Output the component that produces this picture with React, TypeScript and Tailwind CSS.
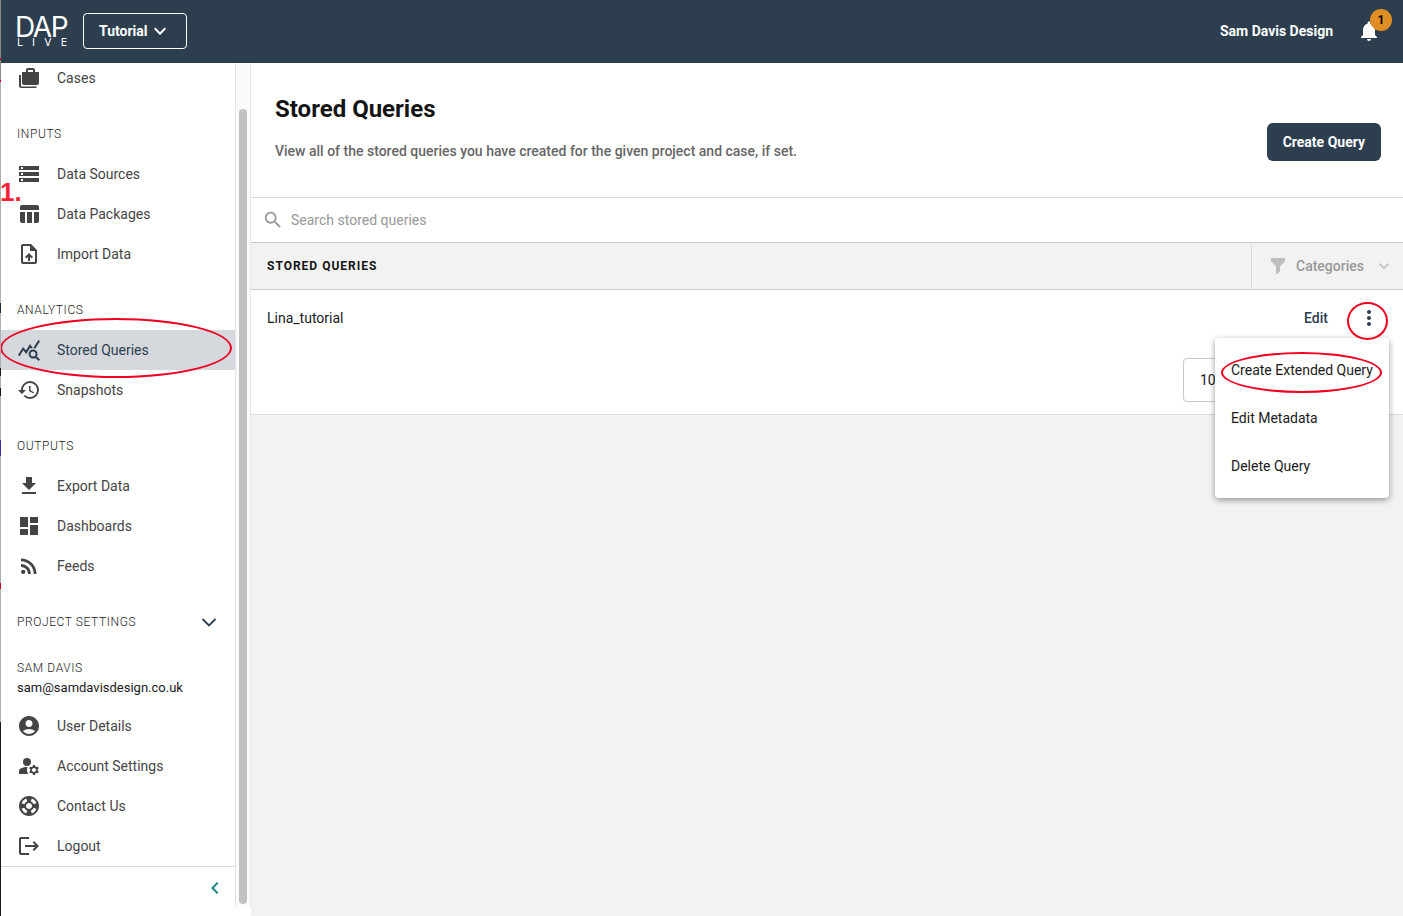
import type { ComponentType, ReactNode, SVGProps } from "react";
import {
  MdAccountCircle,
  MdChevronLeft,
  MdDashboard,
  MdExpandMore,
  MdFileDownload,
  MdHistory,
  MdLogout,
  MdManageAccounts,
  MdMoreVert,
  MdNotifications,
  MdOutlineUploadFile,
  MdQueryStats,
  MdRssFeed,
  MdSearch,
  MdStorage,
  MdSupport,
  MdTableChart,
} from "react-icons/md";

type NavItemProps = { icon: ComponentType<SVGProps<SVGSVGElement>>; label: string; active?: boolean };

function CasesIcon(props: SVGProps<SVGSVGElement>) {
  return (
    <svg viewBox="0 0 24 24" fill="currentColor" {...props}>
      <path
        fillRule="evenodd"
        d="M18 6V4c0-1.100-.9-2-2-2h-5c-1.100 0-2 .9-2 2v2H5v11c0 1.100.9 2 2 2h13c1.100 0 2-.9 2-2V6h-4ZM16 6h-5V4h5v2Z"
      />
      <path d="M4 9H2v11c0 1.100.9 2 2 2h14c1.100 0 2-.9 2-1.600H4V9Z" />
    </svg>
  );
}

function FilterIcon() {
  return (
    <svg viewBox="0 0 14 16" className="h-4 w-[14px]" fill="#bdbdbd" aria-hidden>
      <path d="M.6 0h12.800q.6 0 .6.600v2.400L9 8.600V13.400L5.600 16H5V8.600L0 3V.6Q0 0 .6 0Z" />
    </svg>
  );
}

function ThinChevron() {
  return (
    <svg viewBox="0 0 16 16" className="size-4 text-[#2d3e4f]" fill="none" stroke="currentColor" strokeWidth="1.8" aria-hidden>
      <path d="M1.500 5 8 11.500 14.500 5" />
    </svg>
  );
}

function NavItem({ icon: Icon, label, active }: NavItemProps) {
  return (
    <li className={active ? "relative bg-[#d5d8dd] text-[#2d3e4f]" : "text-[#444444]"}>
      <a href="#" className="flex h-10 items-center gap-4 px-4 text-sm">
        <Icon className="size-6 shrink-0" aria-hidden />
        {label}
      </a>
      {active && <Ring className="-left-px -top-3 h-[60px] w-[232px]" />}
    </li>
  );
}

function NavHeading({ children }: { children: ReactNode }) {
  return (
    <h2 className="mt-4 flex h-10 shrink-0 items-center justify-between pl-4 pr-[18px] text-xs font-light tracking-wider text-[#222222]">
      {children}
    </h2>
  );
}

/* Red annotation ellipse laid over the control it points out. */
function Ring({ className }: { className: string }) {
  return (
    <span
      aria-hidden
      className={`pointer-events-none absolute z-20 rounded-[50%] border-2 border-[#f00020] ${className}`}
    />
  );
}

function Logo() {
  return (
    <a href="#" className="flex w-[54px] flex-col pb-px text-white">
      <span className="font-['Inter',sans-serif] text-[28px] font-normal leading-6 tracking-tighter">DAP</span>
      <span className="flex justify-between px-[2px] font-['DejaVu_Sans',sans-serif] text-[10px] font-normal leading-2">
        <span>L</span>
        <span>I</span>
        <span>V</span>
        <span>E</span>
      </span>
    </a>
  );
}

function TopBar() {
  return (
    <header className="flex h-[63px] shrink-0 items-center border-b border-[#2d3e4f] bg-[#2d3e4f] pl-[14px] pr-[22px] text-sm font-bold text-white">
      <Logo />
      <button className="ml-[14px] flex h-9 w-[104px] items-center rounded border border-white pl-[15px]">
        Tutorial
        <MdExpandMore className="size-6" aria-hidden />
      </button>
      <span className="ml-auto">Sam Davis Design</span>
      <button className="relative ml-6" aria-label="Notifications">
        <MdNotifications className="size-6" aria-hidden />
        <span className="absolute -right-[11px] -top-[10px] flex size-[22px] items-center justify-center rounded-full bg-[#e08e24] text-xs text-black">
          1
        </span>
      </button>
    </header>
  );
}

function Sidebar() {
  return (
    <aside className="flex w-[250px] shrink-0 bg-white pb-[9px]">
      <div className="flex min-w-0 flex-1 flex-col">
        <nav className="flex min-h-0 flex-1 flex-col justify-end overflow-hidden">
          <ul className="shrink-0">
            <NavItem icon={CasesIcon} label="Cases" />
          </ul>
          <NavHeading>INPUTS</NavHeading>
          <ul className="shrink-0">
            <NavItem icon={MdStorage} label="Data Sources" />
            <NavItem icon={MdTableChart} label="Data Packages" />
            <NavItem icon={MdOutlineUploadFile} label="Import Data" />
          </ul>
          <NavHeading>ANALYTICS</NavHeading>
          <ul className="shrink-0">
            <NavItem icon={MdQueryStats} label="Stored Queries" active />
            <NavItem icon={MdHistory} label="Snapshots" />
          </ul>
          <NavHeading>OUTPUTS</NavHeading>
          <ul className="shrink-0">
            <NavItem icon={MdFileDownload} label="Export Data" />
            <NavItem icon={MdDashboard} label="Dashboards" />
            <NavItem icon={MdRssFeed} label="Feeds" />
          </ul>
          <NavHeading>
            PROJECT SETTINGS
            <button aria-label="Expand project settings">
              <ThinChevron />
            </button>
          </NavHeading>
          <div className="mb-2 mt-4 shrink-0 px-4">
            <p className="text-xs font-light leading-5 tracking-wider text-[#222222]">SAM DAVIS</p>
            <p className="text-[13px] leading-5 text-[#1a1a1a]">sam@samdavisdesign.co.uk</p>
          </div>
          <ul className="shrink-0">
            <NavItem icon={MdAccountCircle} label="User Details" />
            <NavItem icon={MdManageAccounts} label="Account Settings" />
            <NavItem icon={MdSupport} label="Contact Us" />
            <NavItem icon={MdLogout} label="Logout" />
          </ul>
        </nav>
        <div className="flex h-[41px] shrink-0 items-center justify-end border-t border-[#dcdcdc] pr-2 pt-[2px]">
          <button aria-label="Collapse menu">
            <MdChevronLeft className="size-6 text-[#168a7f]" aria-hidden />
          </button>
        </div>
      </div>
      <div className="flex w-4 flex-col border-x border-[#e6e6e6] bg-[#fafafa] px-[3px] pb-[3px] pt-[46px]">
        <div className="flex-1 rounded-full bg-[#c1c1c1]" />
      </div>
    </aside>
  );
}

function RowMenu() {
  return (
    <ul
      role="menu"
      className="absolute right-[14px] top-12 z-10 w-[174px] rounded bg-white py-2 text-left text-sm font-normal text-[#1a1a1a] shadow-[0_2px_6px_rgba(0,0,0,0.4)]"
    >
      {["Create Extended Query", "Edit Metadata", "Delete Query"].map((label, i) => (
        <li key={label} role="none" className="relative">
          <button role="menuitem" className="flex h-12 w-full items-center whitespace-nowrap pl-4">
            {label}
          </button>
          {i === 0 && <Ring className="left-[6px] top-[6px] h-[41px] w-[161px]" />}
        </li>
      ))}
    </ul>
  );
}

function QueriesPage() {
  return (
    <main className="flex min-w-0 flex-1 flex-col bg-[#f2f2f2]">
      <div className="border-b border-[#dcdcdc] bg-white">
        <section className="flex h-[135px] items-start justify-between border-b border-[#dcdcdc] pl-6 pr-[22px]">
          <div className="pt-[30px]">
            <h1 className="text-2xl font-bold leading-8 text-[#141414]">Stored Queries</h1>
            <p className="mt-4 text-sm font-medium text-[#666666]">
              View all of the stored queries you have created for the given project and case, if set.
            </p>
          </div>
          <button className="mt-[60px] h-[38px] rounded-md bg-[#2d3e4f] px-4 text-sm font-bold text-white">
            Create Query
          </button>
        </section>

        <label className="flex h-[45px] items-center gap-[7px] border-b border-[#c8c8c8] pl-[11px]">
          <MdSearch className="size-[22px] text-[#999999]" aria-hidden />
          <input
            type="search"
            aria-label="Search stored queries"
            placeholder="Search stored queries"
            className="flex-1 bg-transparent text-sm outline-none placeholder:text-[#999999]"
          />
        </label>

        <table className="w-full border-separate border-spacing-0 text-left text-sm">
          <thead>
            <tr className="h-[47px] bg-[#f2f2f2]">
              <th className="border-b border-[#c8c8c8] pl-4 text-xs font-bold tracking-[1px] text-[#141414]">
                STORED QUERIES
              </th>
              <th className="w-[152px] border-b border-[#c8c8c8] p-0">
                <button className="flex h-11 w-full items-center border-l border-[#dcdcdc] pl-[19px] font-medium text-[#999999]">
                  <FilterIcon />
                  <span className="ml-[11px]">Categories</span>
                  <MdExpandMore className="ml-auto mr-[9px] size-5 text-[#bdbdbd]" aria-hidden />
                </button>
              </th>
            </tr>
          </thead>
          <tbody>
            <tr className="h-14">
              <td className="pl-4 text-[#1a1a1a]">Lina_tutorial</td>
              <td className="relative p-0">
                <div className="flex items-center justify-between pl-[53px] pr-[22px] text-[#2d3e4f]">
                  <button className="font-medium">Edit</button>
                  <button aria-label="More actions" aria-haspopup="menu">
                    <MdMoreVert className="size-6" aria-hidden />
                  </button>
                </div>
                <Ring className="right-[15px] top-3 h-[38px] w-[41px]" />
                <RowMenu />
              </td>
            </tr>
          </tbody>
        </table>

        <div className="flex justify-end px-4 py-3">
          <select
            aria-label="Rows per page"
            className="h-11 w-[204px] appearance-none rounded border border-[#c8c8c8] bg-white pl-4 text-sm text-[#1a1a1a]"
          >
            <option>10</option>
          </select>
        </div>
      </div>
    </main>
  );
}

/* Sliver of the window that lies behind this one. */
function EdgeStrip() {
  return (
    <div aria-hidden className="flex w-px shrink-0 flex-col bg-[#1a1a1a]">
      <div className="h-[58px] bg-[#8a8a8a]" />
      <div className="h-[2px] bg-[#d0021b]" />
      <div className="h-5 bg-[#8a8a8a]" />
      <div className="h-[2px] bg-[#d0021b]" />
      <div className="h-[221px] bg-[#b0b0b0]" />
      <div className="h-[10px] bg-[#1d2a3a]" />
      <div className="h-[55px] bg-[#b0b0b0]" />
      <div className="h-2 bg-[#1a1a1a]" />
      <div className="h-3 bg-[#b0b0b0]" />
      <div className="h-2 bg-[#1a1a1a]" />
      <div className="h-11 bg-[#b0b0b0]" />
      <div className="h-4 bg-[#3a2a9a]" />
      <div className="h-[127px] bg-[#b0b0b0]" />
      <div className="h-[6px] bg-[#d0021b]" />
      <div className="h-[133px] bg-[#b0b0b0]" />
    </div>
  );
}

export default function App() {
  return (
    <div className="relative flex h-screen overflow-hidden bg-white font-['Roboto',sans-serif]">
      <EdgeStrip />
      <div className="flex min-w-0 flex-1 flex-col">
        <TopBar />
        <div className="flex min-h-0 flex-1">
          <Sidebar />
          <QueriesPage />
        </div>
      </div>
      <span className="absolute left-0 top-[178px] font-['Liberation_Sans',sans-serif] text-[26px] font-bold leading-7 text-[#fb1f3a]">
        1.
      </span>
    </div>
  );
}
